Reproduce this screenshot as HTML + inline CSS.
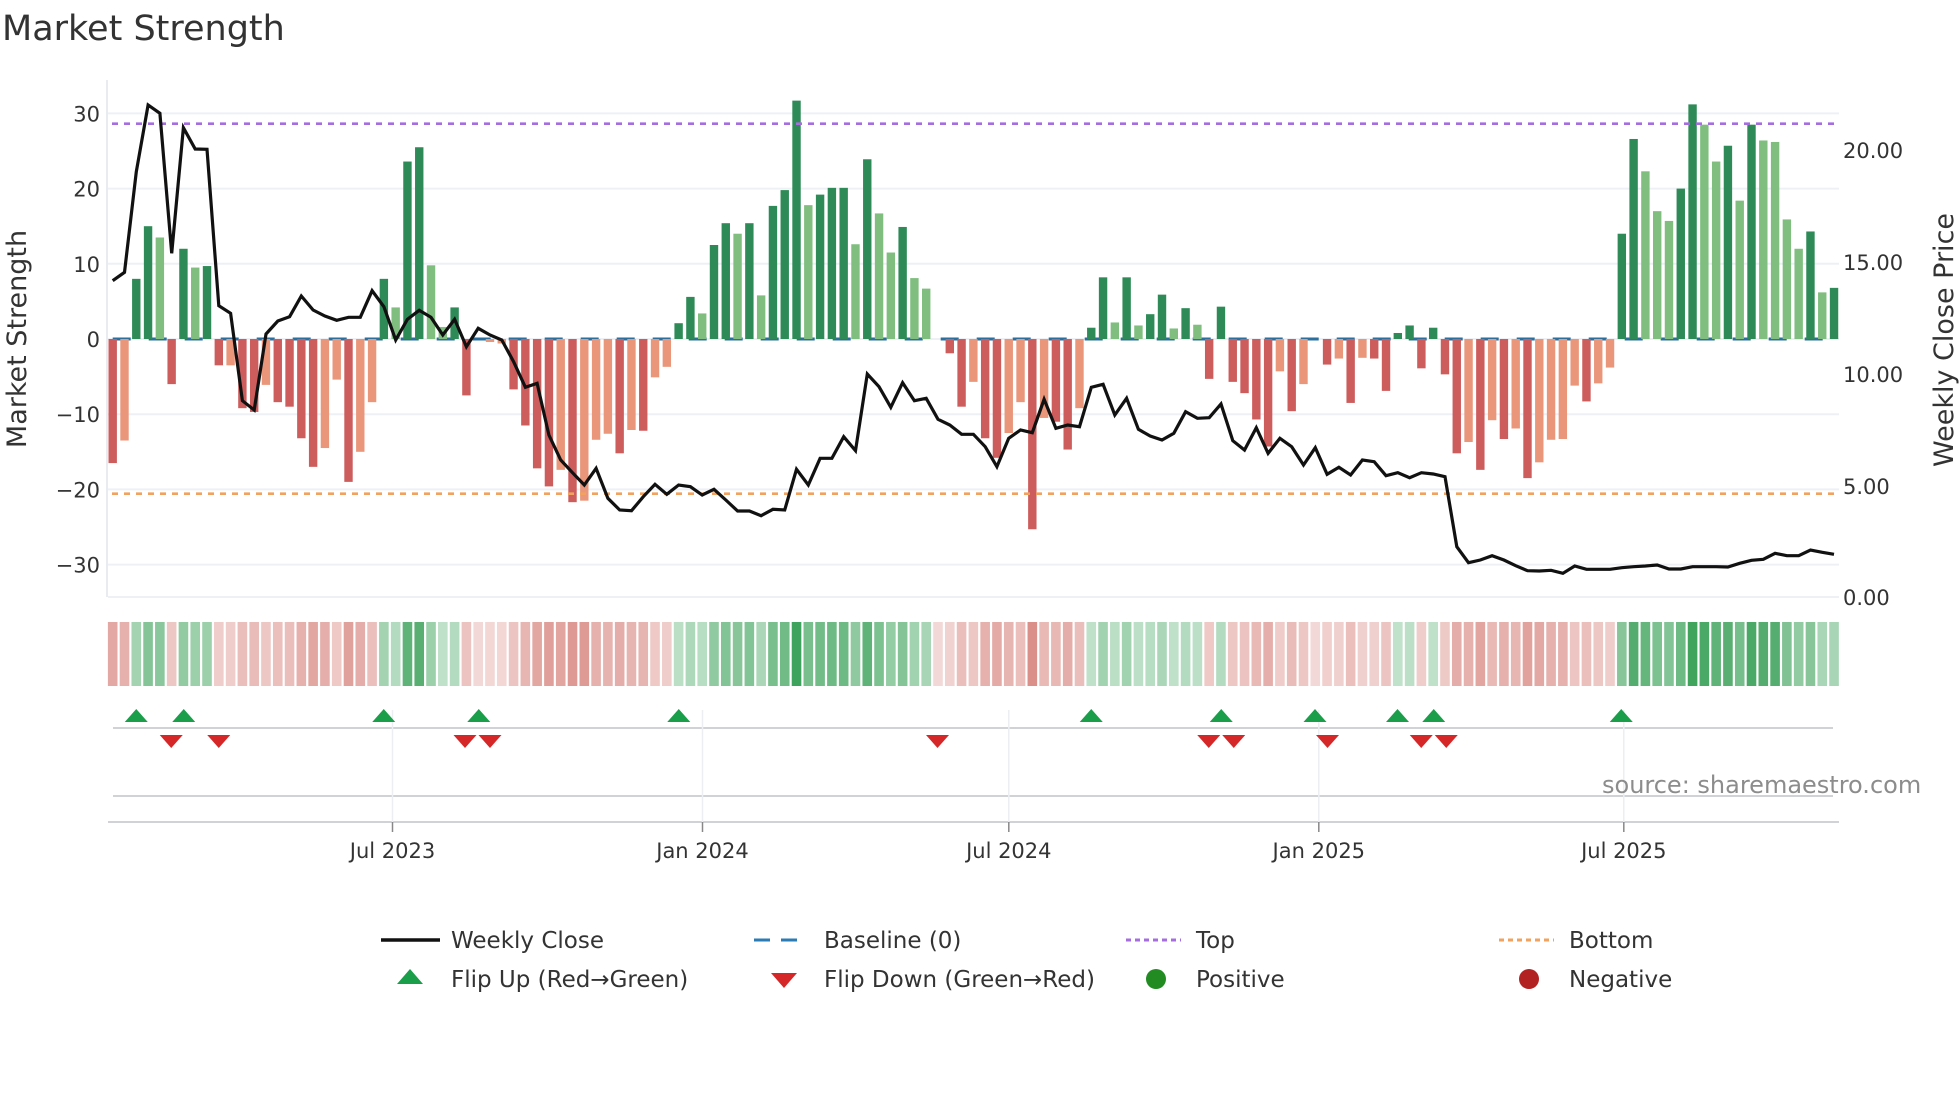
<!DOCTYPE html>
<html><head><meta charset="utf-8"><style>
html,body{margin:0;padding:0;background:#fff;width:1960px;height:1102px;overflow:hidden}
svg{display:block}
text{font-family:"DejaVu Sans","Liberation Sans",sans-serif;fill:#333}
</style></head><body>
<svg id="s" width="1960" height="1102" viewBox="0 0 1960 1102" xmlns="http://www.w3.org/2000/svg">
<text x="2" y="40" font-size="35">Market Strength</text>
<g id="grid"></g>
<g id="bars"></g>
<g id="heat"></g>
<g id="marks"></g>
<text x="1602" y="793" font-size="24" style="fill:#8c8c8c">source: sharemaestro.com</text>
<text transform="translate(26,339) rotate(-90)" font-size="27" text-anchor="middle">Market Strength</text>
<text transform="translate(1953,340) rotate(-90)" font-size="27" text-anchor="middle">Weekly Close Price</text>
<g font-size="23">
<line x1="381" y1="940" x2="440" y2="940" stroke="#111" stroke-width="3.5"/>
<text x="451" y="948">Weekly Close</text>
<line x1="754" y1="940" x2="806" y2="940" stroke="#2b7bb5" stroke-width="3" stroke-dasharray="16 11"/>
<text x="824" y="948">Baseline (0)</text>
<line x1="1126" y1="940" x2="1181" y2="940" stroke="#a66de0" stroke-width="3" stroke-dasharray="5 4"/>
<text x="1196" y="948">Top</text>
<line x1="1499" y1="940" x2="1554" y2="940" stroke="#f2a25e" stroke-width="3" stroke-dasharray="5 4"/>
<text x="1569" y="948">Bottom</text>
<polygon points="410,969 423,984 397,984" fill="#1a9e4a"/>
<text x="451" y="987">Flip Up (Red→Green)</text>
<polygon points="771,973 797,973 784,988" fill="#d62728"/>
<text x="824" y="987">Flip Down (Green→Red)</text>
<circle cx="1156" cy="979" r="10" fill="#228b22"/>
<text x="1196" y="987">Positive</text>
<circle cx="1529" cy="979" r="10" fill="#b22222"/>
<text x="1569" y="987">Negative</text>
</g>
</svg>
<script>
var NS="http://www.w3.org/2000/svg";
function el(p,t,a,txt){var e=document.createElementNS(NS,t);for(var k in a)e.setAttribute(k,a[k]);if(txt!=null)e.textContent=txt;p.appendChild(e);return e;}
var V=[[-16.5,'D'],[-13.5,'L'],[8,'D'],[15,'D'],[13.5,'L'],[-6,'D'],[12,'D'],[9.5,'L'],[9.7,'D'],[-3.5,'D'],[-3.5,'L'],[-9.2,'D'],[-9.7,'D'],[-6.1,'L'],[-8.4,'D'],[-9,'D'],[-13.2,'D'],[-17,'D'],[-14.5,'L'],[-5.4,'L'],[-19,'D'],[-15,'L'],[-8.4,'L'],[8,'D'],[4.2,'L'],[23.6,'D'],[25.5,'D'],[9.8,'L'],[1.6,'L'],[4.2,'D'],[-7.5,'D'],[0,'L'],[-0.4,'L'],[-0.6,'L'],[-6.7,'D'],[-11.5,'D'],[-17.2,'D'],[-19.6,'D'],
[-17.4,'L'],[-21.7,'D'],[-21.5,'L'],[-13.4,'L'],[-12.6,'L'],[-15.2,'D'],[-12.1,'L'],[-12.2,'D'],[-5.1,'L'],[-3.7,'L'],[2.1,'D'],[5.6,'D'],[3.4,'L'],[12.5,'D'],[15.4,'D'],[14,'L'],[15.4,'D'],[5.8,'L'],[17.7,'D'],[19.8,'D'],[31.7,'D'],[17.8,'L'],[19.2,'D'],[20.1,'D'],[20.1,'D'],[12.6,'L'],[23.9,'D'],[16.7,'L'],[11.5,'L'],[14.9,'D'],[8.1,'L'],[6.7,'L'],[0,'L'],[-1.9,'D'],[-9,'D'],[-5.7,'L'],[-13.2,'D'],
[-15.8,'D'],[-12.5,'L'],[-8.4,'L'],[-25.3,'D'],[-10.5,'L'],[-11,'D'],[-14.7,'D'],[-9.2,'L'],[1.5,'D'],[8.2,'D'],[2.2,'L'],[8.2,'D'],[1.8,'L'],[3.3,'D'],[5.9,'D'],[1.4,'L'],[4.1,'D'],[1.9,'L'],[-5.3,'D'],[4.3,'D'],[-5.7,'D'],[-7.2,'D'],[-10.7,'D'],[-14.3,'D'],[-4.3,'L'],[-9.6,'D'],[-6,'L'],[0,'L'],[-3.4,'D'],[-2.6,'L'],[-8.5,'D'],[-2.5,'L'],[-2.6,'D'],[-6.9,'D'],[0.8,'D'],[1.8,'D'],[-3.9,'D'],
[1.5,'D'],[-4.7,'D'],[-15.2,'D'],[-13.7,'L'],[-17.4,'D'],[-10.8,'L'],[-13.3,'D'],[-11.9,'L'],[-18.5,'D'],[-16.4,'L'],[-13.4,'L'],[-13.3,'L'],[-6.2,'L'],[-8.3,'D'],[-5.9,'L'],[-3.8,'L'],[14,'D'],[26.6,'D'],[22.3,'L'],[17,'L'],[15.7,'L'],[20,'D'],[31.2,'D'],[28.5,'L'],[23.6,'L'],[25.7,'D'],[18.4,'L'],[28.5,'D'],[26.4,'L'],[26.2,'L'],[15.9,'L'],[12,'L'],[14.3,'D'],[6.2,'L'],[6.8,'D']];
var LZ=[602,577,275,75,100,520,143,207,208,677,700,962,990,762,723,710,648,690,708,721,712,712,632,680,780,718,691,712,765,718,800,745,765,780,845,922,910,
1065,1140,1178,1215,1165,1255,1290,1292,1250,1213,1243,1215,1220,1245,1228,1260,1293,1293,1307,1288,1290,1168,1215,1135,1135,1070,1112,882,920,982,908,962,955,1018,1035,1063,1063,1100,
1160,1075,1050,1058,958,1045,1035,1040,922,913,1005,955,1048,1068,1080,1060,995,1015,1013,972,1082,1110,1043,1120,1075,1100,1155,1103,1183,1162,1185,1140,1145,1187,1178,1193,1178,
1182,1190,1400,1448,1440,1427,1440,1457,1472,1473,1471,1480,1458,1468,1468,1468,1463,1460,1458,1455,1467,1467,1460,1460,1460,1461,1450,1441,1438,1420,1427,1427,1410,1417,1423];
var X0=112.7,ST=11.79,Z=339,K=7.52;
function xi(i){return X0+ST*i;}
var g=document.getElementById('grid'),b=document.getElementById('bars'),h=document.getElementById('heat'),m=document.getElementById('marks');
// grid
[30,20,10,0,-10,-20,-30].forEach(function(v){var y=Z-K*v;el(g,'line',{x1:108,x2:1839,y1:y,y2:y,stroke:'#edf0f5','stroke-width':2});
el(g,'text',{x:100,y:y+8,'font-size':21,'text-anchor':'end'},(v<0?'\u2212'+(-v):''+v));});
el(g,'line',{x1:108,x2:1839,y1:597,y2:597,stroke:'#edf0f5','stroke-width':2});
el(g,'line',{x1:107,x2:107,y1:80,y2:597,stroke:'#e8ebf0','stroke-width':2});
[['20.00',150],['15.00',262],['10.00',374],['5.00',486],['0.00',597]].forEach(function(a){el(g,'text',{x:1843,y:a[1]+8,'font-size':21},a[0]);});
// baseline
el(b,'line',{x1:112.7,x2:1839,y1:Z,y2:Z,stroke:'#2b6f9e','stroke-width':3,'stroke-dasharray':'18 18'});
// bars
V.forEach(function(a,i){var v=a[0];if(v===0)return;var x=xi(i)-4.2,y=v>0?Z-K*v:Z,hh=Math.abs(K*v);
var c=v>0?(a[1]=='D'?'#2e8b57':'#7fbe7f'):(a[1]=='D'?'#cd5c5c':'#e9967a');
el(b,'rect',{x:x,y:y,width:8.4,height:hh,fill:c});});
// top/bottom
el(b,'line',{x1:112,x2:1839,y1:123.7,y2:123.7,stroke:'#a66de0','stroke-width':2.6,'stroke-dasharray':'6 6'});
el(b,'line',{x1:112,x2:1839,y1:493.7,y2:493.7,stroke:'#f2a25e','stroke-width':2.6,'stroke-dasharray':'6 6'});
// line
var pts=LZ.map(function(zy,i){return xi(i).toFixed(1)+','+(80+zy/3).toFixed(1);}).join(' ');
el(b,'polyline',{points:pts,fill:'none',stroke:'#111','stroke-width':3.2,'stroke-linejoin':'miter'});
// heat strip
V.forEach(function(a,i){var v=a[0],t=Math.min(1,Math.abs(v)/32),al=0.3+0.7*t;
var c=v>0?'rgba(60,162,90,'+al.toFixed(2)+')':'rgba(205,100,92,'+(0.25+0.6*t).toFixed(2)+')';
el(h,'rect',{x:xi(i)-4.8,y:622,width:9.6,height:64,fill:c});});
// marker axes
el(m,'line',{x1:113,x2:1833,y1:728,y2:728,stroke:'#d0d2d6','stroke-width':2});
el(m,'line',{x1:113,x2:1833,y1:796,y2:796,stroke:'#d0d2d6','stroke-width':2});
el(m,'line',{x1:108,x2:1839,y1:822,y2:822,stroke:'#d0d2d6','stroke-width':2});
[[392.5,'Jul 2023'],[702.5,'Jan 2024'],[1008.8,'Jul 2024'],[1318.8,'Jan 2025'],[1623.8,'Jul 2025']].forEach(function(a){
el(m,'line',{x1:a[0],x2:a[0],y1:710,y2:822,stroke:'#eceef2','stroke-width':1.5});
el(m,'line',{x1:a[0],x2:a[0],y1:822,y2:832,stroke:'#888','stroke-width':1.5});
el(m,'text',{x:a[0],y:858,'font-size':21,'text-anchor':'middle'},a[1]);});
[109,147,307,383,543,873,977,1052,1118,1147,1297].forEach(function(d){var x=d*1.25;
el(m,'polygon',{points:x+',709 '+(x+11.5)+',722 '+(x-11.5)+',722',fill:'#1a9e4a'});});
[137,175,372,392,750,967,987,1062,1137,1157].forEach(function(d){var x=d*1.25;
el(m,'polygon',{points:(x-11.5)+',735 '+(x+11.5)+',735 '+x+',748',fill:'#d62728'});});
</script>
</body></html>
